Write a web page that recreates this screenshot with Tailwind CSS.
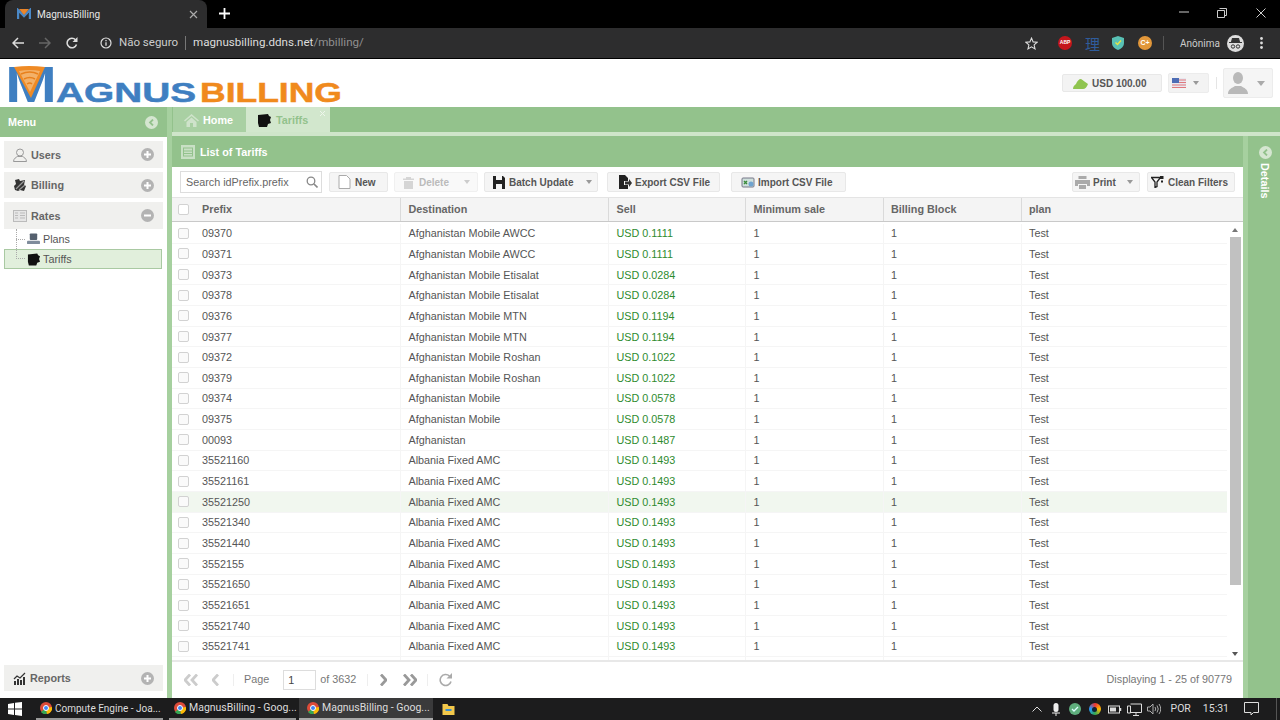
<!DOCTYPE html>
<html lang="pt">
<head>
  <meta charset="UTF-8">
  <title>MagnusBilling</title>
  <script src="https://cdn.jsdelivr.net/npm/@tailwindcss/browser@4"></script>
</head>
<body class="w-[1280px] h-[720px] overflow-hidden flex flex-col bg-white font-['Liberation_Sans',Arial,sans-serif] text-[10.8px] text-[#444]">

  <!-- Browser tabs -->
  <div class="h-[28px] shrink-0 bg-black flex items-end text-white font-['Roboto',sans-serif]">
    <div class="ml-[5px] w-[202px] h-[28px] bg-[#2d2d2e] rounded-t-lg flex items-center pl-[12px] pr-[9px]">
      <svg width="14" height="12" viewBox="0 0 14 12"><path d="M1 11V2l6 6 6-6v9" fill="none" stroke="#4a88c7" stroke-width="2.4"/><path d="M2 1h10L7 7z" fill="#e9852b"/></svg>
      <span class="ml-[6px] text-[10px] text-[#e6e6e6]">MagnusBilling</span>
      <svg class="ml-auto" width="9" height="9" viewBox="0 0 9 9"><path d="M1 1l7 7M8 1L1 8" stroke="#aaa" stroke-width="1.2"/></svg>
    </div>
    <svg class="ml-[12px] mb-[9px]" width="11" height="11" viewBox="0 0 11 11"><path d="M5.5 0v11M0 5.5h11" stroke="#fff" stroke-width="1.8"/></svg>
    <div class="ml-auto flex items-center h-full self-start pb-[3px]">
      <svg class="mr-[28px]" width="10" height="10" viewBox="0 0 10 10"><path d="M0 4h10" stroke="#ccc" stroke-width="1"/></svg>
      <svg class="mr-[29px]" width="10" height="10" viewBox="0 0 10 10"><path d="M2.500 .5h7v7h-2M.5 2.500h7v7h-7z" fill="none" stroke="#ccc"/></svg>
      <svg class="mr-[14px]" width="10" height="10" viewBox="0 0 10 10"><path d="M.5 .5l9 9M9.500 .5l-9 9" stroke="#ccc"/></svg>
    </div>
  </div>

  <!-- Browser toolbar -->
  <div class="h-[31px] shrink-0 bg-[#2d2d2e] border-b border-black flex items-center font-['Roboto',sans-serif] text-[#ddd]">
    <svg class="ml-[12px]" width="12" height="12" viewBox="0 0 12 12"><path d="M12 6H1.500M6 1L1 6l5 5" fill="none" stroke="#ddd" stroke-width="1.500"/></svg>
    <svg class="ml-[15px]" width="12" height="12" viewBox="0 0 12 12"><path d="M0 6h10.500M6 1l5 5-5 5" fill="none" stroke="#666" stroke-width="1.500"/></svg>
    <svg class="ml-[15px]" width="12" height="12" viewBox="0 0 12 12"><path d="M10.500 7.500A4.800 4.800 0 1 1 9.500 2.800" fill="none" stroke="#ddd" stroke-width="1.500"/><path d="M11.500 0v5h-5z" fill="#ddd"/></svg>
    <svg class="ml-[22px]" width="12" height="12" viewBox="0 0 12 12"><circle cx="6" cy="6" r="5" fill="none" stroke="#ddd" stroke-width="1.200"/><path d="M6 5.300v3.500M6 3v1.300" stroke="#ddd" stroke-width="1.300"/></svg>
    <span class="ml-[7px] w-[59px] whitespace-nowrap text-[11.5px] text-[#ccc]">Não seguro</span>
    <span class="ml-[7px] w-px h-[14px] bg-[#777]"></span>
    <span class="ml-[7px] text-[11.6px] text-[#ddd]">magnusbilling.ddns.net<span class="text-[#909090]">/mbilling/</span></span>
    <svg class="ml-auto" width="13" height="13" viewBox="0 0 24 24"><path d="M12 2l3 7 7.500.7-5.700 5 1.700 7.300-6.500-3.900L5.500 22l1.700-7.300-5.700-5L9 9z" fill="none" stroke="#ddd" stroke-width="2"/></svg>
    <span class="ml-[20px] w-[14px] h-[14px] rounded-full bg-[#c4161c] text-white text-[5px] font-bold flex items-center justify-center font-['Liberation_Sans',sans-serif]">ABP</span>
    <span class="ml-[13px] text-[15px] text-[#2f5c9c] font-['Noto_Sans_CJK_SC',sans-serif] leading-none">理</span>
    <svg class="ml-[12px]" width="12" height="14" viewBox="0 0 12 14"><path d="M6 0l6 2v5c0 3.500-3 6-6 7-3-1-6-3.500-6-7V2z" fill="#58c0b4"/><path d="M3.500 6.500L5.500 8.500 9 4.500" fill="none" stroke="#e3e34a" stroke-width="1.500"/></svg>
    <span class="ml-[14px] w-[14px] h-[14px] rounded-full bg-[#e2973a] text-white text-[7px] font-bold flex items-center justify-center font-['Liberation_Sans',sans-serif]">C+</span>
    <span class="ml-[11px] w-px h-[14px] bg-[#555]"></span>
    <span class="ml-[16px] text-[10px] text-[#ccc]">Anônima</span>
    <span class="ml-[7px] w-[17px] h-[17px] rounded-full bg-[#ddd] flex items-center justify-center">
      <svg width="13" height="11" viewBox="0 0 13 11"><path d="M3.500 0h6l1 4h-8zM0 4.500h13" stroke="#333" fill="#333"/><circle cx="4" cy="8.500" r="1.700" fill="none" stroke="#333"/><circle cx="9" cy="8.500" r="1.700" fill="none" stroke="#333"/></svg>
    </span>
    <svg class="ml-[16px] mr-[17px]" width="3" height="12" viewBox="0 0 3 12"><circle cx="1.500" cy="1.500" r="1.400" fill="#ddd"/><circle cx="1.500" cy="6" r="1.400" fill="#ddd"/><circle cx="1.500" cy="10.500" r="1.400" fill="#ddd"/></svg>
  </div>

  <!-- App header -->
  <div class="h-[48px] shrink-0 flex items-center bg-white">
    <svg class="ml-[7px] self-start mt-[7px] overflow-visible" width="336" height="40" viewBox="0 0 336 40" font-family="Liberation Sans, Arial, sans-serif" font-weight="bold">
      <text x="-2" y="36" font-size="50" textLength="52" lengthAdjust="spacingAndGlyphs" fill="#3f7fc1">M</text>
      <path d="M7 1q15-2 31 0L24 32z" fill="#ef8a24"/>
      <path d="M12 5q11-2 21 0L23 26z" fill="#f3b169"/>
      <path d="M14 8q9-4 17 0M17 13q6-3 11 0M20 18q3-2 5 0" fill="none" stroke="#e8801c" stroke-width="1.500"/>
      <text x="49" y="36" font-size="28" textLength="140" lengthAdjust="spacingAndGlyphs" fill="#3f7fc1" stroke="#3f7fc1" stroke-width=".5">AGNUS</text>
      <text x="193" y="36" font-size="28" textLength="142" lengthAdjust="spacingAndGlyphs" fill="#f08a1d" stroke="#f08a1d" stroke-width=".5">BILLING</text>
    </svg>
    <div class="ml-auto w-[100px] flex items-center bg-[#f3f3f3] border border-[#e8e8e8] rounded-[2px] pl-[10px] mr-[6px] h-[18px]">
      <svg width="15" height="11" viewBox="0 0 15 11"><path d="M0 11c0-3 2-4 3-5 1-3 3-5 5-5 2 1 4 3 7 5-1 3-3 5-5 5z" fill="#8fc44f"/></svg>
      <span class="ml-[4px] text-[10px] font-bold text-[#555]">USD 100.00</span>
    </div>
    <div class="h-[20px] w-[41px] bg-[#f3f3f3] border border-[#ececec] rounded-[2px] flex items-center pl-[3px]">
      <svg width="14" height="10" viewBox="0 0 14 10"><rect width="14" height="10" fill="#e8e8f0"/><path d="M0 2h14M0 4.500h14M0 7h14M0 9.500h14" stroke="#e0787c" stroke-width="1.100"/><rect width="7" height="5" fill="#4e6db5"/></svg>
      <span class="ml-[7px] w-0 h-0 border-x-[3.500px] border-x-transparent border-t-[4px] border-t-[#999]"></span>
    </div>
    <span class="ml-[7px] w-px h-[12px] bg-[#e5e5e5]"></span>
    <div class="ml-[6px] mr-[7px] h-[30px] w-[50px] bg-[#f5f5f5] border border-[#ececec] rounded-[2px] flex items-center pl-[4px]">
      <svg width="20" height="22" viewBox="0 0 20 22"><ellipse cx="10" cy="6" rx="5" ry="6" fill="#b9b9b9"/><path d="M0 22c0-5 4-6 7-8h6c3 2 7 3 7 8z" fill="#b9b9b9"/></svg>
      <span class="ml-[9px] w-0 h-0 border-x-[4px] border-x-transparent border-t-[5px] border-t-[#aaa]"></span>
    </div>
  </div>

  <!-- App body -->
  <div class="h-[591px] shrink-0 flex bg-[#93c28c]">

    <!-- Sidebar -->
    <aside class="w-[167px] shrink-0 flex flex-col bg-white">
      <div class="h-[30px] shrink-0 bg-[#93c28c] flex items-center justify-between pl-[8px] pr-[9px] text-white font-bold">
        Menu
        <span class="w-[13px] h-[13px] rounded-full bg-[#d5e6d1] flex items-center justify-center">
          <svg width="7" height="7" viewBox="0 0 7 7"><path d="M5 .5L2 3.500 5 6.500" fill="none" stroke="#93c28c" stroke-width="1.800"/></svg>
        </span>
      </div>
      <div class="pt-[4px] px-[4px] flex flex-col gap-[4px]">
        <div class="h-[26.5px] bg-[#f0f0ee] flex items-center pl-[9px] pr-[9px] pt-[1px] font-bold text-[#666]">
          <svg width="14" height="14" viewBox="0 0 14 14"><circle cx="7" cy="4.500" r="3.500" fill="none" stroke="#999"/><path d="M.5 13.500c0-3 3-4.500 4-5h5c1 .5 4 2 4 5z" fill="none" stroke="#999"/></svg>
          <span class="ml-[4px]">Users</span>
          <span class="ml-auto w-[13px] h-[13px] rounded-full bg-[#b3b3b3] flex items-center justify-center"><svg width="9" height="9" viewBox="0 0 9 9"><path d="M4.500 1v7M1 4.500h7" stroke="#fff" stroke-width="2"/></svg></span>
        </div>
        <div class="h-[26.5px] bg-[#f0f0ee] flex items-center pl-[9px] pr-[9px] pt-[1px] font-bold text-[#666]">
          <svg width="14" height="14" viewBox="0 0 14 14"><path d="M2 2l4-1 1 2 5-1-1 5 2 1-2 5-4-1-2 1-3-1-1-4 2-2z" fill="#333"/><path d="M3 11L11 3M6 12l6-5" stroke="#999" stroke-width="1.200"/></svg>
          <span class="ml-[4px]">Billing</span>
          <span class="ml-auto w-[13px] h-[13px] rounded-full bg-[#b3b3b3] flex items-center justify-center"><svg width="9" height="9" viewBox="0 0 9 9"><path d="M4.500 1v7M1 4.500h7" stroke="#fff" stroke-width="2"/></svg></span>
        </div>
        <div class="h-[26.5px] bg-[#f0f0ee] flex items-center pl-[9px] pr-[9px] pt-[1px] font-bold text-[#666]">
          <svg width="14" height="14" viewBox="0 0 14 14"><rect x=".5" y="1.500" width="13" height="11" fill="#e6e6e6" stroke="#bbb"/><path d="M2 4h3M2 6.500h3M2 9h3M7 4h5M7 6.500h5M7 9h5" stroke="#bbb"/></svg>
          <span class="ml-[4px]">Rates</span>
          <span class="ml-auto w-[13px] h-[13px] rounded-full bg-[#b3b3b3] flex items-center justify-center"><svg width="9" height="9" viewBox="0 0 9 9"><path d="M1 4.500h7" stroke="#fff" stroke-width="2"/></svg></span>
        </div>
      </div>
      <div class="ml-[4px] mt-[.5px] w-[158px] relative">
        <div class="h-[20px] flex items-center pl-[23px] text-[#555]">
          <svg width="13" height="12" viewBox="0 0 14 12"><rect x="3" y="0" width="8" height="7" rx="1" fill="#55606e"/><rect x="0" y="8" width="14" height="3.500" rx="1" fill="#7f8c9c"/></svg>
          <span class="ml-[3px]">Plans</span>
        </div>
        <div class="h-[20px] flex items-center pl-[22px] text-[#555] bg-[#e1efdc] border border-[#a9c9a2]">
          <svg width="13" height="13" viewBox="0 0 14 13"><path d="M1 1l10-1 1 2 2 1-1 3 1 3-3 1-1 3H2L1 9z" fill="#111"/></svg>
          <span class="ml-[3px]">Tariffs</span>
        </div>
        <div class="absolute left-[12px] top-0 h-[30px] w-[9px] border-l border-b border-dotted border-[#aaa]"></div>
        <div class="absolute left-[12px] top-[10px] w-[9px] border-t border-dotted border-[#aaa]"></div>
      </div>
      <div class="mt-auto mb-[7px] mx-[4px] h-[26px] bg-[#f0f0ee] flex items-center pl-[9px] pr-[9px] font-bold text-[#666]">
        <svg width="13" height="13" viewBox="0 0 13 13"><path d="M1 13V9h2v4zM4 13V7h2v6zM7 13V8h2v5zM10 13V5h2v8z" fill="#333"/><path d="M1 7l3-3 3 2 5-5" fill="none" stroke="#333" stroke-width="1.200"/></svg>
        <span class="ml-[4px]">Reports</span>
        <span class="ml-auto w-[13px] h-[13px] rounded-full bg-[#b3b3b3] flex items-center justify-center"><svg width="9" height="9" viewBox="0 0 9 9"><path d="M4.500 1v7M1 4.500h7" stroke="#fff" stroke-width="2"/></svg></span>
      </div>
    </aside>

    <div class="w-[5px] shrink-0 bg-[#a6d09f]"></div>

    <main class="flex-1 flex flex-col min-w-0">
      <!-- Tabs -->
      <div class="h-[25px] shrink-0 flex font-bold">
        <div class="ml-px w-[73px] bg-[#a9d0a3] flex items-center pl-[11px] pt-[1px] text-white">
          <svg width="15" height="13" viewBox="0 0 15 13"><path d="M7.500 0L0 6.500l1 1 6.500-5.500L14 7.500l1-1zM2.500 8l5-4.500 5 4.500v5H9V9H6v4H2.500z" fill="#cfe3cb"/></svg>
          <span class="ml-[4px]">Home</span>
        </div>
        <div class="w-[84px] bg-[#d2e7cd] flex items-center pl-[11px] pt-[1px] text-[#93c28c] relative">
          <svg width="14" height="13" viewBox="0 0 14 13"><path d="M1 1l10-1 1 2 2 1-1 3 1 3-3 1-1 3H2L1 9z" fill="#111"/></svg>
          <span class="ml-[5px]">Tariffs</span>
          <svg class="absolute right-[5px] top-[4px]" width="5" height="5" viewBox="0 0 5 5"><path d="M0 0l5 5M5 0L0 5" stroke="#eef6ec"/></svg>
        </div>
      </div>
      <div class="h-[4px] shrink-0 bg-[#cfe5ca]"></div>

      <div class="flex-1 flex min-h-0">
        <!-- Grid panel -->
        <section class="w-[1071px] shrink-0 flex flex-col">
          <div class="h-[31px] shrink-0 bg-[#93c28c] flex items-center pl-[9px] pt-[1px] text-white font-bold">
            <svg width="14" height="14" viewBox="0 0 14 14"><rect width="14" height="14" fill="#c9e0c5"/><rect x="2.500" y="3" width="9" height="8" fill="none" stroke="#93c28c"/><path d="M2.500 6h9M2.500 8.500h9" stroke="#93c28c"/></svg>
            <span class="ml-[5px]">List of Tariffs</span>
          </div>

          <!-- Toolbar -->
          <div class="h-[30px] shrink-0 bg-white flex items-center pl-[8px] text-[10px] font-bold text-[#555]">
            <div class="w-[142px] h-[22px] border border-[#ddd] flex items-center pl-[5px] pr-[3px] font-normal text-[10.8px] text-[#666]">
              Search idPrefix.prefix
              <svg class="ml-auto" width="12" height="12" viewBox="0 0 12 12"><circle cx="5" cy="5" r="3.800" fill="none" stroke="#888" stroke-width="1.300"/><path d="M8 8l3.500 3.500" stroke="#888" stroke-width="1.600"/></svg>
            </div>
            <div class="ml-[7px] w-[59px] h-[20px] bg-[#f5f5f5] border border-[#e8e8e8] rounded-[2px] flex items-center pl-[8px]">
              <svg width="13" height="14" viewBox="0 0 13 14"><path d="M1 .5h7.500L12 4v9.500H1z" fill="#fff" stroke="#aaa"/></svg>
              <span class="ml-[4px]">New</span>
            </div>
            <div class="ml-[6px] w-[84px] h-[20px] bg-[#f9f9f9] border border-[#f0f0f0] rounded-[2px] flex items-center pl-[7px] text-[#bbb]">
              <svg width="13" height="13" viewBox="0 0 13 13"><path d="M4 1h5v1.500h3V4H1V2.500h3zM2 5h9v8H2z" fill="#d5d5d5"/></svg>
              <span class="ml-[4px]">Delete</span>
              <span class="ml-auto mr-[7px] w-0 h-0 border-x-[3.500px] border-x-transparent border-t-[4px] border-t-[#ccc]"></span>
            </div>
            <div class="ml-[6px] w-[114px] h-[20px] bg-[#f5f5f5] border border-[#e8e8e8] rounded-[2px] flex items-center pl-[8px]">
              <svg width="12" height="13" viewBox="0 0 12 13"><path d="M0 0h3v4h6V0h1l2 2v11H9V8H3v5H0z" fill="#222"/></svg>
              <span class="ml-[4px]">Batch Update</span>
              <span class="ml-auto mr-[5px] w-0 h-0 border-x-[3.500px] border-x-transparent border-t-[4px] border-t-[#999]"></span>
            </div>
            <div class="ml-[9px] w-[113px] h-[20px] bg-[#f5f5f5] border border-[#e8e8e8] rounded-[2px] flex items-center pl-[10px]">
              <svg width="14" height="14" viewBox="0 0 14 14"><path d="M1 0h6l3 3v3H6v4h4v4H1z" fill="#222"/><path d="M7 6.500h4V4l3 4-3 4V9.500H7z" fill="#333"/></svg>
              <span class="ml-[3px]">Export CSV File</span>
            </div>
            <div class="ml-[11px] w-[115px] h-[20px] bg-[#f5f5f5] border border-[#e8e8e8] rounded-[2px] flex items-center pl-[9px]">
              <svg width="14" height="14" viewBox="0 0 14 14"><rect x="1" y="3" width="12" height="9" rx="1" fill="#cfe0dc" stroke="#778"/><path d="M3 6l3 3m0-3L3 9" stroke="#3a8a3a" stroke-width="1.400"/><circle cx="10" cy="9" r="2.500" fill="#6fa3cf"/></svg>
              <span class="ml-[3px]">Import CSV File</span>
            </div>
            <div class="ml-auto w-[68px] h-[20px] bg-[#f5f5f5] border border-[#e8e8e8] rounded-[2px] flex items-center pl-[2px]">
              <svg width="15" height="13" viewBox="0 0 15 13"><path d="M3.500 0h8v3h-8zM0 4h15v6h-3V8H3v2H0zM4 9h7v4H4z" fill="#aaa"/></svg>
              <span class="ml-[3px]">Print</span>
              <span class="ml-auto mr-[6px] w-0 h-0 border-x-[3.500px] border-x-transparent border-t-[4px] border-t-[#999]"></span>
            </div>
            <div class="ml-[7px] mr-[8px] w-[88px] h-[20px] bg-[#f5f5f5] border border-[#e8e8e8] rounded-[2px] flex items-center pl-[3px]">
              <svg width="13" height="12" viewBox="0 0 13 12"><path d="M.5 1.500h9L6 6v4.500L4 11.500V6z" fill="none" stroke="#222" stroke-width="1.300"/><path d="M9 0h3.500v3H9zM10 4.500h2v2h-2z" fill="#222"/></svg>
              <span class="ml-[4px]">Clean Filters</span>
            </div>
          </div>

          <!-- Column headers -->
          <div class="h-[25px] shrink-0 bg-[#f4f4f4] border-y border-t-[#e4e4e4] border-b-[#c9c9c9] grid grid-cols-[22.5px_206.5px_208px_137px_137.5px_138px_1fr] items-stretch font-bold text-[#666] [&>span]:flex [&>span]:items-center [&>span]:pl-[7.500px] [&>span]:border-r [&>span]:border-[#dadada]">
            <div class="flex items-center pl-[6px]"><i class="w-[11px] h-[11px] border border-[#d2d2d2] bg-white rounded-[2px]"></i></div>
            <span>Prefix</span>
            <span>Destination</span>
            <span>Sell</span>
            <span>Minimum sale</span>
            <span>Billing Block</span>
            <span class="!border-r-0">plan</span>
          </div>

          <!-- Rows + scrollbar -->
          <div class="h-[438px] shrink-0 bg-white flex overflow-hidden">
            <div class="w-[1055px] shrink-0 overflow-hidden pt-[1.500px] text-[#555] [&>div]:grid [&>div]:grid-cols-[22.5px_206.5px_208px_137px_137.5px_138px_1fr] [&>div]:h-[20.67px] [&>div]:border-b [&>div]:border-[#f5f5f5] [&>div>span]:flex [&>div>span]:items-center [&>div>span]:pl-[7.500px] [&>div>span]:border-r [&>div>span]:border-[#f5f5f5] [&>div>span:last-child]:border-r-0 [&>div>span:nth-child(4)]:text-[#2e8b2e] [&>div>i]:w-[11px] [&>div>i]:h-[11px] [&>div>i]:ml-[6px] [&>div>i]:self-center [&>div>i]:border [&>div>i]:border-[#d2d2d2] [&>div>i]:rounded-[2px] [&>div>i]:bg-[#fafafa]">
              <div><i></i><span>09370</span><span>Afghanistan Mobile AWCC</span><span>USD 0.1111</span><span>1</span><span>1</span><span>Test</span></div>
              <div><i></i><span>09371</span><span>Afghanistan Mobile AWCC</span><span>USD 0.1111</span><span>1</span><span>1</span><span>Test</span></div>
              <div><i></i><span>09373</span><span>Afghanistan Mobile Etisalat</span><span>USD 0.0284</span><span>1</span><span>1</span><span>Test</span></div>
              <div><i></i><span>09378</span><span>Afghanistan Mobile Etisalat</span><span>USD 0.0284</span><span>1</span><span>1</span><span>Test</span></div>
              <div><i></i><span>09376</span><span>Afghanistan Mobile MTN</span><span>USD 0.1194</span><span>1</span><span>1</span><span>Test</span></div>
              <div><i></i><span>09377</span><span>Afghanistan Mobile MTN</span><span>USD 0.1194</span><span>1</span><span>1</span><span>Test</span></div>
              <div><i></i><span>09372</span><span>Afghanistan Mobile Roshan</span><span>USD 0.1022</span><span>1</span><span>1</span><span>Test</span></div>
              <div><i></i><span>09379</span><span>Afghanistan Mobile Roshan</span><span>USD 0.1022</span><span>1</span><span>1</span><span>Test</span></div>
              <div><i></i><span>09374</span><span>Afghanistan Mobile</span><span>USD 0.0578</span><span>1</span><span>1</span><span>Test</span></div>
              <div><i></i><span>09375</span><span>Afghanistan Mobile</span><span>USD 0.0578</span><span>1</span><span>1</span><span>Test</span></div>
              <div><i></i><span>00093</span><span>Afghanistan</span><span>USD 0.1487</span><span>1</span><span>1</span><span>Test</span></div>
              <div><i></i><span>35521160</span><span>Albania Fixed AMC</span><span>USD 0.1493</span><span>1</span><span>1</span><span>Test</span></div>
              <div><i></i><span>35521161</span><span>Albania Fixed AMC</span><span>USD 0.1493</span><span>1</span><span>1</span><span>Test</span></div>
              <div class="bg-[#f1f7ef]"><i></i><span>35521250</span><span>Albania Fixed AMC</span><span>USD 0.1493</span><span>1</span><span>1</span><span>Test</span></div>
              <div><i></i><span>35521340</span><span>Albania Fixed AMC</span><span>USD 0.1493</span><span>1</span><span>1</span><span>Test</span></div>
              <div><i></i><span>35521440</span><span>Albania Fixed AMC</span><span>USD 0.1493</span><span>1</span><span>1</span><span>Test</span></div>
              <div><i></i><span>3552155</span><span>Albania Fixed AMC</span><span>USD 0.1493</span><span>1</span><span>1</span><span>Test</span></div>
              <div><i></i><span>35521650</span><span>Albania Fixed AMC</span><span>USD 0.1493</span><span>1</span><span>1</span><span>Test</span></div>
              <div><i></i><span>35521651</span><span>Albania Fixed AMC</span><span>USD 0.1493</span><span>1</span><span>1</span><span>Test</span></div>
              <div><i></i><span>35521740</span><span>Albania Fixed AMC</span><span>USD 0.1493</span><span>1</span><span>1</span><span>Test</span></div>
              <div><i></i><span>35521741</span><span>Albania Fixed AMC</span><span>USD 0.1493</span><span>1</span><span>1</span><span>Test</span></div>
              <div><u></u><span></span><span></span><span></span><span></span><span></span><span></span></div>
            </div>
            <div class="flex-1 flex flex-col items-center bg-white pt-[6px] pb-[4px]">
              <span class="w-0 h-0 border-x-[3.500px] border-x-transparent border-b-[4px] border-b-[#777]"></span>
              <span class="mt-[5px] w-[11px] h-[348px] bg-[#c1c1c1]"></span>
              <span class="mt-auto w-0 h-0 border-x-[3.500px] border-x-transparent border-t-[4px] border-t-[#555]"></span>
            </div>
          </div>

          <!-- Pager -->
          <div class="h-[38px] shrink-0 bg-white border-t-2 border-[#e8e8e8] flex items-center pl-[12px] pb-[1px] text-[#777]">
            <svg width="14" height="12" viewBox="0 0 14 12"><path d="M6 .5L1 6l5 5.500M13 .5L8 6l5 5.500" fill="none" stroke="#ccc" stroke-width="2.800"/></svg>
            <svg class="ml-[14px]" width="7" height="12" viewBox="0 0 7 12"><path d="M6 .5L1 6l5 5.500" fill="none" stroke="#ccc" stroke-width="2.800"/></svg>
            <span class="ml-[14px] w-px h-[12px] bg-[#eee]"></span>
            <span class="ml-[10px]">Page</span>
            <span class="ml-[14px] w-[33px] h-[20px] border border-[#ddd] flex items-center pl-[4px] pt-[2px] text-[#444]">1</span>
            <span class="ml-[4px]">of 3632</span>
            <span class="ml-[11px] w-px h-[12px] bg-[#eee]"></span>
            <svg class="ml-[12px]" width="7" height="12" viewBox="0 0 7 12"><path d="M1 .5L6 6l-5 5.500" fill="none" stroke="#999" stroke-width="2.800"/></svg>
            <svg class="ml-[16px]" width="14" height="12" viewBox="0 0 14 12"><path d="M1 .5L6 6l-5 5.500M8 .5L13 6l-5 5.500" fill="none" stroke="#999" stroke-width="2.800"/></svg>
            <span class="ml-[10px] w-px h-[12px] bg-[#eee]"></span>
            <svg class="ml-[11px]" width="14" height="14" viewBox="0 0 14 14"><path d="M12 8.500A5.500 5.500 0 1 1 10.500 3" fill="none" stroke="#aaa" stroke-width="1.600"/><path d="M13 0v5.500H7.500z" fill="#aaa"/></svg>
            <span class="ml-auto mr-[11px]">Displaying 1 - 25 of 90779</span>
          </div>
        </section>

        <div class="w-[5px] shrink-0 bg-[#a6d09f]"></div>

        <!-- Details panel -->
        <div class="flex-1 flex flex-col items-center pt-[10px] pl-[2px] text-white font-bold">
          <span class="w-[13px] h-[13px] rounded-full bg-[#d5e6d1] flex items-center justify-center">
            <svg width="7" height="7" viewBox="0 0 7 7"><path d="M5 .5L2 3.500 5 6.500" fill="none" stroke="#93c28c" stroke-width="1.800"/></svg>
          </span>
          <span class="mt-[4px] [writing-mode:vertical-rl]">Details</span>
        </div>
      </div>
    </main>
  </div>

  <!-- Windows taskbar -->
  <div class="h-[22px] shrink-0 bg-[#1c1c1d] flex items-center font-['Roboto',sans-serif] text-[10.5px] text-[#ddd]">
    <svg class="ml-[8px]" width="14" height="14" viewBox="0 0 14 14"><path d="M0 2l6-1v5.500H0zM7 .8L14 0v6.500H7zM0 7.500h6V13l-6-1zM7 7.500h7V14l-7-1z" fill="#fff"/></svg>
    <div class="ml-[14px] w-[127px] h-full flex items-center pl-[4px] border-b-2 border-[#999]">
      <svg class="shrink-0" width="12" height="12" viewBox="0 0 12 12"><circle cx="6" cy="6" r="6" fill="#dd4b39"/><path d="M6 6L1 10a6 6 0 0 0 6 2z" fill="#34a853"/><path d="M6 6l6-1a6 6 0 0 1-5 7z" fill="#fbbc05"/><circle cx="6" cy="6" r="2.500" fill="#4285f4" stroke="#fff"/></svg>
      <span class="ml-[3px] whitespace-nowrap text-[10px]">Compute Engine - Joa...</span>
    </div>
    <div class="ml-[6px] w-[127px] h-full flex items-center pl-[5px] border-b-2 border-[#999]">
      <svg class="shrink-0" width="12" height="12" viewBox="0 0 12 12"><circle cx="6" cy="6" r="6" fill="#dd4b39"/><path d="M6 6L1 10a6 6 0 0 0 6 2z" fill="#34a853"/><path d="M6 6l6-1a6 6 0 0 1-5 7z" fill="#fbbc05"/><circle cx="6" cy="6" r="2.500" fill="#4285f4" stroke="#fff"/></svg>
      <span class="ml-[3px] whitespace-nowrap">MagnusBilling - Goog...</span>
    </div>
    <div class="ml-[3px] w-[134px] h-full flex items-center pl-[8px] bg-[#3a3a3b] border-b-2 border-[#aaa]">
      <svg class="shrink-0" width="12" height="12" viewBox="0 0 12 12"><circle cx="6" cy="6" r="6" fill="#dd4b39"/><path d="M6 6L1 10a6 6 0 0 0 6 2z" fill="#34a853"/><path d="M6 6l6-1a6 6 0 0 1-5 7z" fill="#fbbc05"/><circle cx="6" cy="6" r="2.500" fill="#4285f4" stroke="#fff"/></svg>
      <span class="ml-[3px] whitespace-nowrap">MagnusBilling - Goog...</span>
    </div>
    <svg class="ml-[9px]" width="13" height="11" viewBox="0 0 12 11"><path d="M0 0h5l1 2h6v9H0z" fill="#f3c84b"/><rect x="3" y="5" width="6" height="2" fill="#3b8ed0"/></svg>

    <svg class="ml-auto" width="10" height="6" viewBox="0 0 10 6"><path d="M.5 5.500L5 1l4.500 4.500" fill="none" stroke="#ddd"/></svg>
    <svg class="ml-[10px]" width="8" height="13" viewBox="0 0 8 13"><rect x="1.500" width="5" height="9" rx="2.500" fill="#eee"/><path d="M0 10h8M4 10v3" stroke="#eee"/></svg>
    <span class="ml-[9px] w-[12px] h-[12px] rounded-full bg-[#5fae7d] flex items-center justify-center"><svg width="8" height="8" viewBox="0 0 8 8"><path d="M1 4l2 2 4-4" fill="none" stroke="#dff" stroke-width="1.300"/></svg></span>
    <span class="ml-[8px] w-[12px] h-[12px] rounded-full bg-[conic-gradient(#e33,#fb0,#3a5,#29f,#e33)] flex items-center justify-center"><i class="w-[5px] h-[5px] rounded-full bg-[#123]"></i></span>
    <svg class="ml-[7px]" width="14" height="9" viewBox="0 0 14 9"><rect x=".5" y="1" width="11" height="7" fill="none" stroke="#ddd"/><rect x="2" y="2.500" width="6" height="4" fill="#ddd"/><path d="M12.500 3v3" stroke="#ddd" stroke-width="1.500"/></svg>
    <svg class="ml-[5px]" width="15" height="13" viewBox="0 0 15 13"><path d="M3.500 1h11v8.500h-11M6 12.500h6M9 9.500v3M.5 3h3v7h-3z" fill="none" stroke="#ddd"/></svg>
    <svg class="ml-[5px]" width="14" height="12" viewBox="0 0 14 12"><path d="M.5 4h2.500L6 1v10L3 8H.5zM8 4q1.500 2 0 4M10 2.500q2.500 3.500 0 7M12 1q3.500 5 0 10" fill="none" stroke="#bbb" stroke-width=".9"/></svg>
    <span class="ml-[10px]">POR</span>
    <span class="ml-[12px]">15:31</span>
    <svg class="ml-[15px]" width="15" height="14" viewBox="0 0 15 14"><path d="M.5.500h14v10H9.500L7 13V10.500H.5z" fill="none" stroke="#ddd"/></svg>
    <span class="ml-[17px] w-px h-full bg-[#555]"></span>
    <span class="w-[3px]"></span>
  </div>
</body>
</html>
